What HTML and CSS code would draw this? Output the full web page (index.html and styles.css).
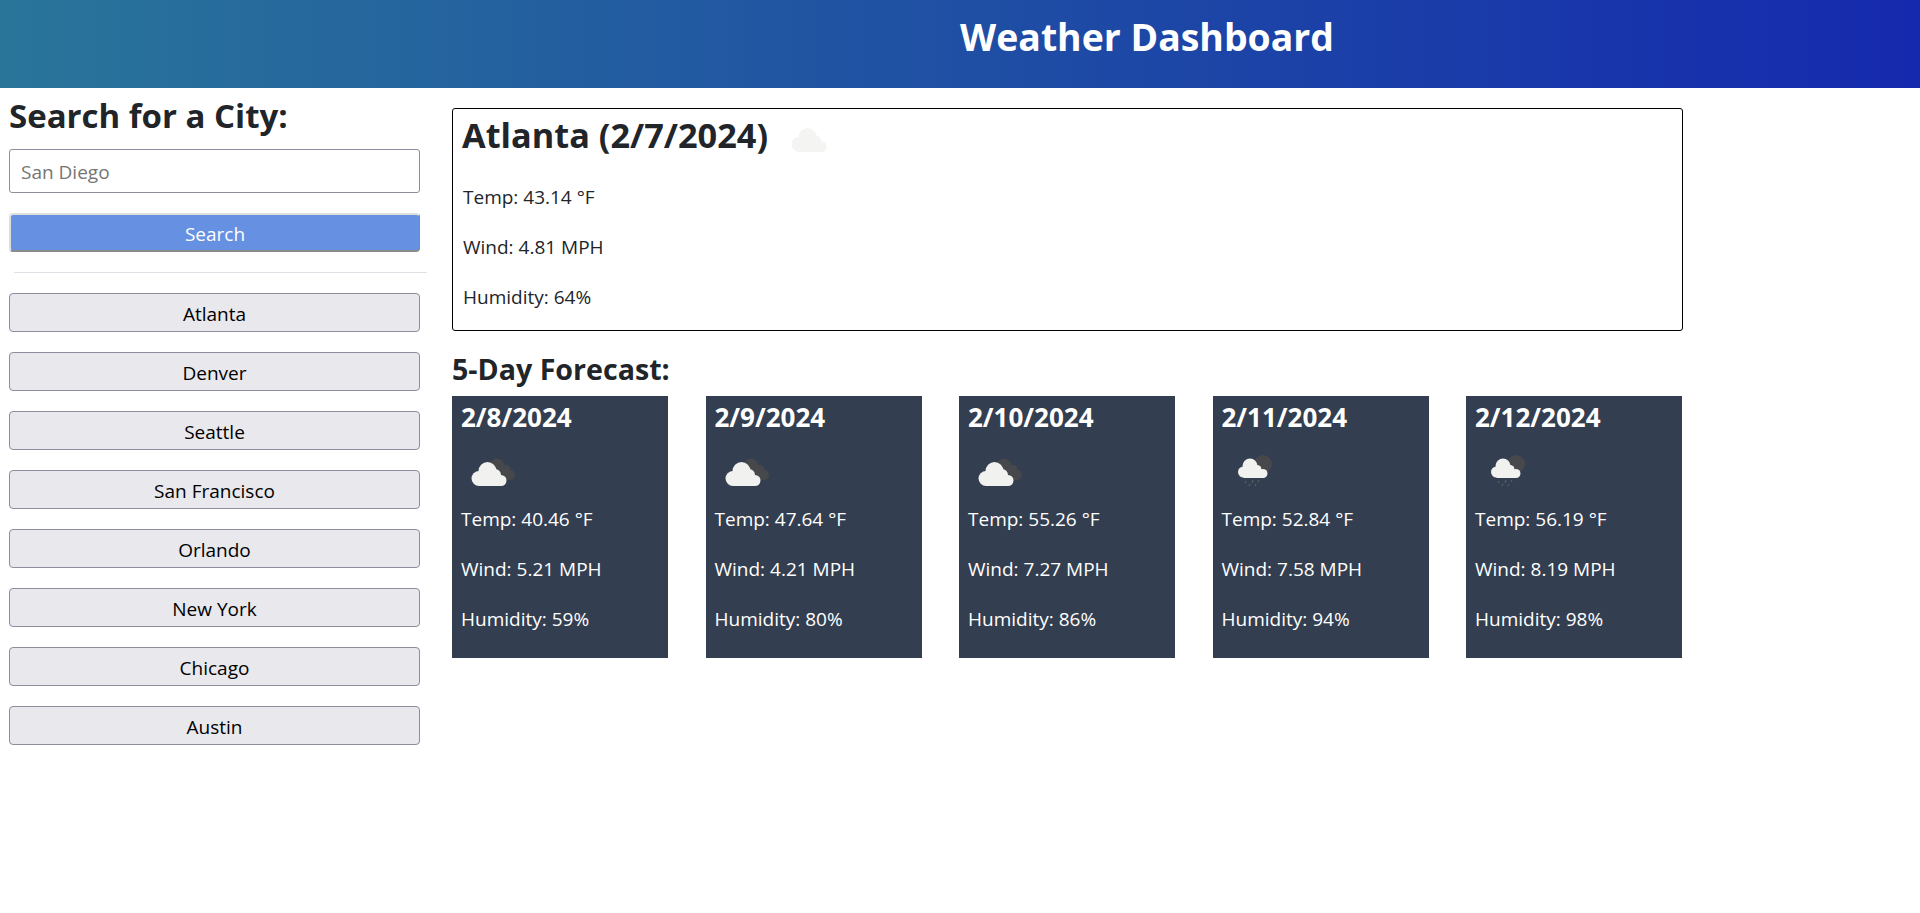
FILE: index.html
```html
<!DOCTYPE html>
<html lang="en">
<head>
    <meta charset="UTF-8">
    <meta name="viewport" content="width=device-width, initial-scale=1.0">
    <title>Weather Dashboard</title>
    <link rel="stylesheet" href="styles.css">
</head>
<body>
    <svg class="icon-defs" width="0" height="0" aria-hidden="true">
        <symbol id="cloud" viewBox="0 0 60 50">
            <circle cx="18" cy="30.5" r="7.5"/>
            <circle cx="26.5" cy="23" r="9"/>
            <circle cx="34" cy="27" r="6"/>
            <circle cx="40" cy="32.5" r="5.5"/>
            <rect x="18" y="28" width="22" height="10"/>
        </symbol>
        <symbol id="broken" viewBox="0 0 60 50">
            <g fill="#47484b">
                <circle cx="36" cy="17.5" r="7"/>
                <circle cx="44" cy="22" r="5.5"/>
                <circle cx="49" cy="27" r="5"/>
                <rect x="36" y="20" width="12" height="12"/>
            </g>
            <use href="#cloud" width="60" height="50" fill="#f1f1ef"/>
        </symbol>
        <symbol id="rain" viewBox="0 0 60 50">
            <circle cx="41" cy="16" r="9" fill="#47484b"/>
            <g fill="#f1f1ef">
                <circle cx="21.5" cy="24" r="5.5"/>
                <circle cx="28" cy="18" r="7.5"/>
                <circle cx="35" cy="21.5" r="4.5"/>
                <circle cx="41" cy="25.5" r="4.5"/>
                <rect x="21.5" y="22" width="19.5" height="8"/>
            </g>
            <path d="M24 33l-1 2M31 32l-1 3M37 32l-1 2M28 36l-1 2M34 36l-1 2" stroke="#5a5e64" stroke-width="1.2" fill="none"/>
        </symbol>
    </svg>

    <!-- Header -->
    <header class="page-header">
        <h1>Weather Dashboard</h1>
    </header>

    <div class="layout">
        <!-- Search -->
        <aside class="sidebar">
            <h2>Search for a City:</h2>
            <input class="city-input" type="text" placeholder="San Diego">
            <button class="btn btn-search" type="button">Search</button>
            <hr class="divider">
            <div class="history">
                <button class="btn" type="button">Atlanta</button>
                <button class="btn" type="button">Denver</button>
                <button class="btn" type="button">Seattle</button>
                <button class="btn" type="button">San Francisco</button>
                <button class="btn" type="button">Orlando</button>
                <button class="btn" type="button">New York</button>
                <button class="btn" type="button">Chicago</button>
                <button class="btn" type="button">Austin</button>
            </div>
        </aside>

        <!-- Results -->
        <main class="results">
            <section class="today">
                <h2 class="today-title">Atlanta (2/7/2024)
                    <svg class="today-icon"><use href="#cloud"/></svg>
                </h2>
                <p>Temp: 43.14 °F</p>
                <p>Wind: 4.81 MPH</p>
                <p>Humidity: 64%</p>
            </section>

            <h3 class="forecast-title">5-Day Forecast:</h3>
            <div class="forecast">
                <div class="card">
                    <h4>2/8/2024</h4>
                    <svg class="card-icon"><use href="#broken"/></svg>
                    <p>Temp: 40.46 °F</p>
                    <p>Wind: 5.21 MPH</p>
                    <p>Humidity: 59%</p>
                </div>
                <div class="card">
                    <h4>2/9/2024</h4>
                    <svg class="card-icon"><use href="#broken"/></svg>
                    <p>Temp: 47.64 °F</p>
                    <p>Wind: 4.21 MPH</p>
                    <p>Humidity: 80%</p>
                </div>
                <div class="card">
                    <h4>2/10/2024</h4>
                    <svg class="card-icon"><use href="#broken"/></svg>
                    <p>Temp: 55.26 °F</p>
                    <p>Wind: 7.27 MPH</p>
                    <p>Humidity: 86%</p>
                </div>
                <div class="card">
                    <h4>2/11/2024</h4>
                    <svg class="card-icon"><use href="#rain"/></svg>
                    <p>Temp: 52.84 °F</p>
                    <p>Wind: 7.58 MPH</p>
                    <p>Humidity: 94%</p>
                </div>
                <div class="card">
                    <h4>2/12/2024</h4>
                    <svg class="card-icon"><use href="#rain"/></svg>
                    <p>Temp: 56.19 °F</p>
                    <p>Wind: 8.19 MPH</p>
                    <p>Humidity: 98%</p>
                </div>
            </div>
        </main>
    </div>
</body>
</html>
```

FILE: styles.css
```css
/* Reset */
* {
    margin: 0;
    padding: 0;
    box-sizing: border-box;
}

body {
    font-family: 'Open Sans', 'Noto Sans', sans-serif;
    font-size: 19px;
    line-height: 30px;
    color: #212529;
    background: #fff;
}

.icon-defs {
    position: absolute;
}

/* Header */
.page-header {
    height: 88px;
    padding: 13px 0 0 374px;
    display: flex;
    justify-content: center;
    align-items: flex-start;
    color: #fff;
    background: linear-gradient(to right, #29759a, #1529ae);
}

.page-header h1 {
    font-size: 37.4px;
    line-height: 48px;
    font-weight: 700;
}

/* Layout */
.layout {
    display: flex;
    align-items: flex-start;
}

.sidebar {
    width: 427px;
    padding: 8px 0 0 9px;
}

.sidebar h2 {
    font-size: 33px;
    line-height: 40px;
    font-weight: 700;
    margin-bottom: 13px;
}

.city-input {
    display: block;
    width: 411px;
    height: 44px;
    padding: 1px 11px 0;
    font: inherit;
    color: #212529;
    border: 1px solid #8f8d9d;
    border-radius: 3px;
}

.city-input::placeholder {
    color: #757575;
    opacity: 1;
}

.btn {
    display: block;
    width: 411px;
    height: 39px;
    padding-top: 2px;
    font: inherit;
    color: #000;
    background: #e9e8ed;
    border: 1px solid #8f8d9d;
    border-radius: 4px;
    cursor: pointer;
}

.btn-search {
    margin-top: 20px;
    color: #fff;
    background: #6690e2;
    border-width: 2px 1px 2px 2px;
    border-color: #dedede #8a8a8a #8a8a8a #dedede;
}

.divider {
    margin: 20px 0 20px 5px;
    border: 0;
    border-top: 1px solid #dee2e6;
}

.history {
    display: flex;
    flex-direction: column;
    gap: 20px;
}

/* Results */
.results {
    width: 1231px;
    margin-left: 25px;
    padding-top: 20px;
}

.today {
    height: 223px;
    padding: 0 10px 0 9px;
    border: 1px solid #000;
    border-radius: 3px;
}

.today-title {
    display: flex;
    align-items: center;
    height: 50px;
    padding-top: 2px;
    font-size: 34.3px;
    line-height: 48px;
    font-weight: 700;
    margin-bottom: 23px;
}

.today-icon {
    width: 60px;
    height: 50px;
    margin: 8px 0 0 13px;
    fill: #f4f4f2;
}

.today p,
.card p {
    margin-bottom: 20px;
}

.today p {
    padding-left: 1px;
}

.forecast-title {
    margin-top: 19px;
    font-size: 28.6px;
    line-height: 38px;
    font-weight: 700;
}

.forecast {
    display: flex;
    justify-content: space-between;
    width: 1230px;
    margin-top: 8px;
}

.card {
    width: 216px;
    height: 262px;
    padding: 6px 9px;
    color: #fff;
    background: #333e50;
}

.card h4 {
    font-size: 26px;
    line-height: 30px;
    font-weight: 700;
}

.card-icon {
    display: block;
    width: 60px;
    height: 50px;
    margin: 16px 0 6px;
}
```
